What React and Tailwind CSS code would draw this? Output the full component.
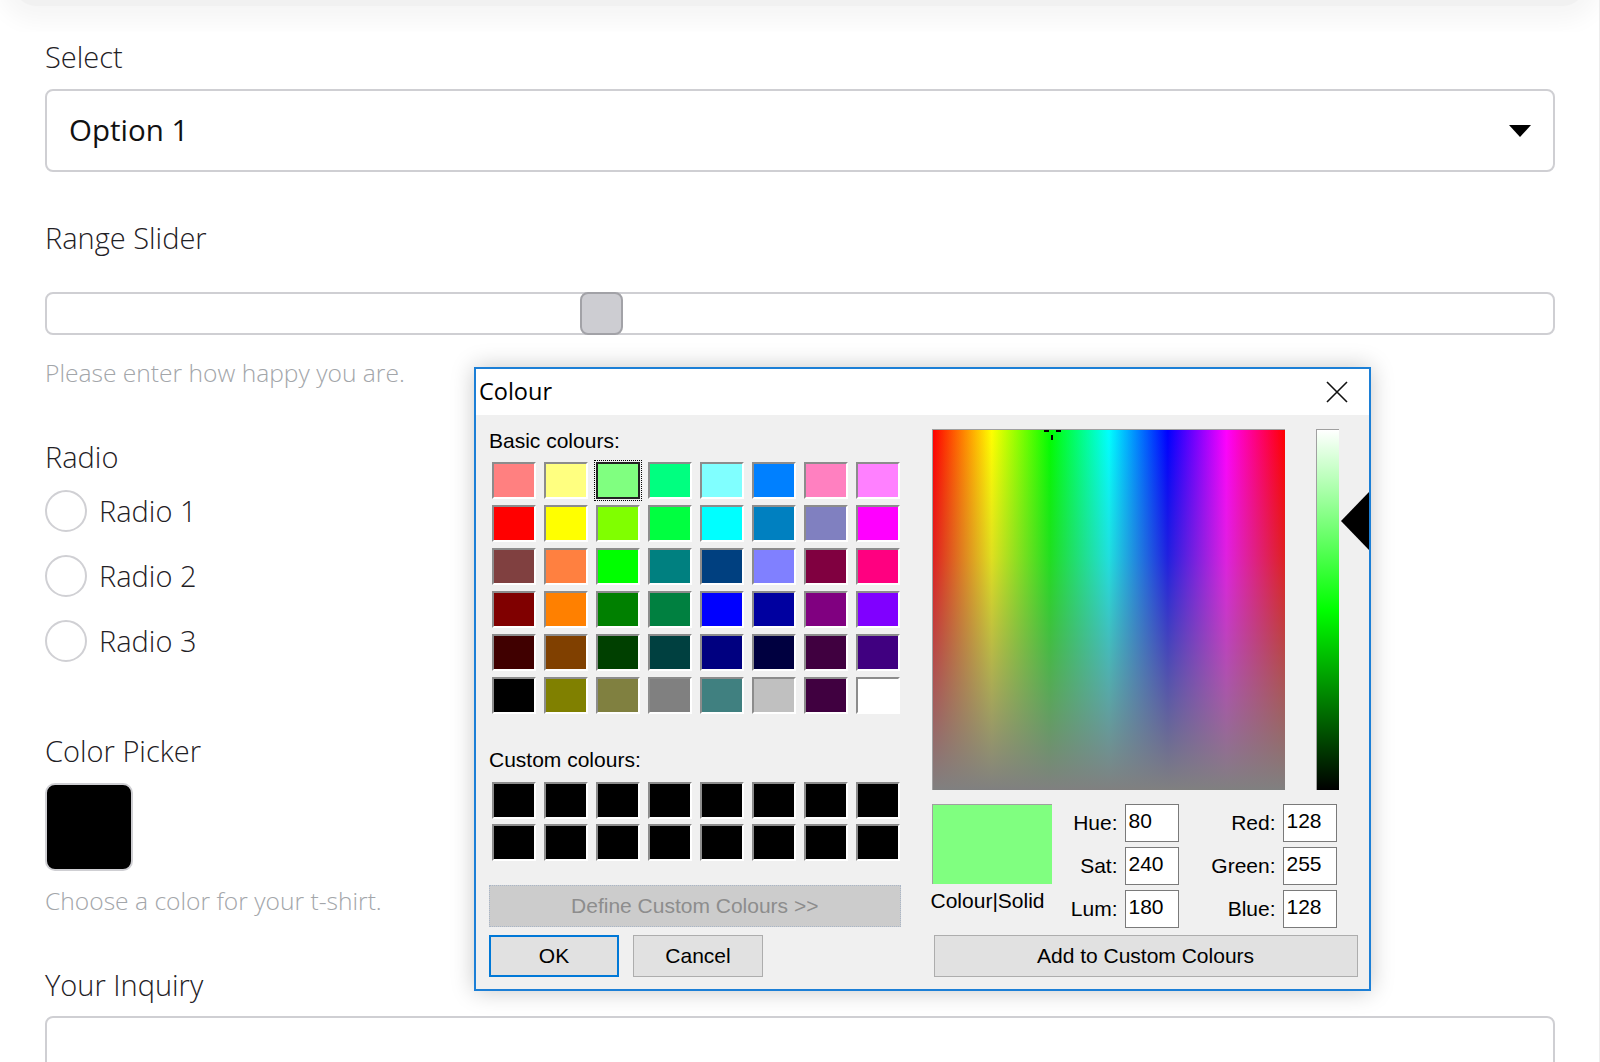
import React from 'react';

const basicColours = [
  ['#ff8080', '#ffff80', '#80ff80', '#00ff80', '#80ffff', '#0080ff', '#ff80c0', '#ff80ff'],
  ['#ff0000', '#ffff00', '#80ff00', '#00ff40', '#00ffff', '#0080c0', '#8080c0', '#ff00ff'],
  ['#804040', '#ff8040', '#00ff00', '#008080', '#004080', '#8080ff', '#800040', '#ff0080'],
  ['#800000', '#ff8000', '#008000', '#008040', '#0000ff', '#0000a0', '#800080', '#8000ff'],
  ['#400000', '#804000', '#004000', '#004040', '#000080', '#000040', '#400040', '#400080'],
  ['#000000', '#808000', '#808040', '#808080', '#408080', '#c0c0c0', '#400040', '#ffffff'],
];

const Swatch = ({ color, selected }) => (
  <div
    className={`w-[44px] h-[37px] border-2 ${
      selected
        ? 'border-[#222] outline outline-1 outline-dotted outline-black outline-offset-[1px]'
        : 'border-t-[#8c8c8c] border-l-[#8c8c8c] border-b-white border-r-white'
    }`}
    style={{ backgroundColor: color }}
  />
);

const NumField = ({ label, value }) => (
  <div className="flex items-start justify-end gap-[7px]">
    <span className="pt-[7px] leading-[24px]">{label}</span>
    <div className="w-[54px] h-[38px] bg-white border border-[#7a7a7a] pl-[3px] pt-[4px] leading-[24px]">
      {value}
    </div>
  </div>
);

const ColourDialog = () => (
  <div className="absolute left-[474px] top-[367px] w-[897px] h-[624px] flex flex-col border-2 border-[#1c7fd6] bg-[#f0f0f0] shadow-[0_0_22px_rgba(0,0,0,0.22)] font-['Liberation_Sans',Arial,sans-serif] text-[21px] text-black">
    {/* Title bar */}
    <div className="h-[46px] bg-white flex items-center justify-between pl-[3px] pr-[21px]">
      <span className="font-['Open_Sans',sans-serif] text-[23.5px] leading-none">Colour</span>
      <svg width="22" height="22" viewBox="0 0 22 22">
        <path d="M1 1 L21 21 M21 1 L1 21" stroke="#111" strokeWidth="1.6" fill="none" />
      </svg>
    </div>

    <div className="flex-1 flex pl-[13px] pt-[14px]">
      {/* Left column */}
      <div className="w-[412px] flex flex-col">
        <div className="leading-[24px]">Basic colours:</div>
        <div className="mt-[9px] ml-[3px] grid grid-cols-[repeat(8,44px)] gap-x-[8px] gap-y-[6px]">
          {basicColours.flat().map((c, i) => (
            <Swatch key={i} color={c} selected={i === 2} />
          ))}
        </div>
        <div className="mt-[34px] leading-[24px]">Custom colours:</div>
        <div className="mt-[10px] ml-[3px] grid grid-cols-[repeat(8,44px)] gap-x-[8px] gap-y-[5px]">
          {Array.from({ length: 16 }).map((_, i) => (
            <Swatch key={i} color="#000000" />
          ))}
        </div>
        <div className="mt-[24px] h-[42px] flex items-center justify-center bg-[#cccccc] border border-dotted border-[#a9b6c8] text-[#8d8d8d]">
          Define Custom Colours &gt;&gt;
        </div>
        <div className="mt-[8px] flex gap-[14px]">
          <div className="w-[130px] h-[42px] flex items-center justify-center bg-[#e1e1e1] border-2 border-[#0078d7]">OK</div>
          <div className="w-[130px] h-[42px] flex items-center justify-center bg-[#e1e1e1] border border-[#adadad]">Cancel</div>
        </div>
      </div>

      {/* Right column */}
      <div className="ml-[31px] w-[438px] flex flex-col">
        <div className="flex items-start">
          <div className="relative w-[353px] h-[361px] border-t border-l border-[#a0a0a0] bg-[linear-gradient(to_bottom,rgba(128,128,128,0),rgba(128,128,128,0.25)_35%,#808080),linear-gradient(to_right,#f00,#ff0,#0f0,#0ff,#00f,#f0f,#f00)]">
            <div className="absolute left-[111px] top-0 w-[5px] h-[2px] bg-black" />
            <div className="absolute left-[123px] top-0 w-[5px] h-[2px] bg-black" />
            <div className="absolute left-[118px] top-[5px] w-[2px] h-[5px] bg-black" />
          </div>
          <div className="ml-[31px] w-[23px] h-[361px] border-t border-l border-[#a0a0a0] bg-[linear-gradient(to_bottom,#fff,#0f0_50%,#000)]" />
          <svg className="ml-[2px] mt-[63px]" width="28" height="58" viewBox="0 0 28 58">
            <path d="M0 29 L28 0 L28 58 Z" fill="#000" />
          </svg>
        </div>

        <div className="mt-[14px] flex">
          <div className="w-[120px] flex flex-col">
            <div className="h-[80px] bg-[#80ff80] border-t border-l border-[#a0a0a0]" />
            <div className="mt-[5px] -ml-[1px] leading-[24px] whitespace-nowrap">Colour|Solid</div>
          </div>
          <div className="w-[127px] flex flex-col gap-[5px]">
            <NumField label="Hue:" value="80" />
            <NumField label="Sat:" value="240" />
            <NumField label="Lum:" value="180" />
          </div>
          <div className="w-[158px] flex flex-col gap-[5px]">
            <NumField label="Red:" value="128" />
            <NumField label="Green:" value="255" />
            <NumField label="Blue:" value="128" />
          </div>
        </div>

        <div className="mt-[7px] ml-[2px] w-[424px] h-[42px] flex items-center justify-center bg-[#e1e1e1] border border-[#adadad]">
          Add to Custom Colours
        </div>
      </div>
    </div>
  </div>
);

const Label = ({ children, className = '' }) => (
  <div className={`text-[29px] font-light leading-[36px] text-[#1f2125] ${className}`}>{children}</div>
);

const Help = ({ children, className = '' }) => (
  <div className={`text-[24.6px] font-light leading-[32px] text-[#a3a6aa] ${className}`}>{children}</div>
);

const Radio = ({ label }) => (
  <div className="flex items-center h-[42px]">
    <div className="w-[42px] h-[42px] rounded-full border-2 border-[#d0d0d4] bg-white" />
    <span className="ml-[12px] text-[29px] font-light text-[#1f2125]">{label}</span>
  </div>
);

export default function App() {
  return (
    <div className="relative w-[1600px] h-[1062px] overflow-hidden bg-white border-r border-[#ededed] font-['Open_Sans',sans-serif]">
      {/* shadow of the card above */}
      <div className="h-[32px] overflow-hidden px-[14px]">
        <div className="-mt-[38px] h-[44px] rounded-[26px] bg-[#f1f1f1] shadow-[0_0_22px_16px_#f6f6f6]" />
      </div>

      <div className="pl-[45px] pr-[44px] flex flex-col">
        <Label className="mt-[7px]">Select</Label>
        <div className="mt-[14px] h-[83px] rounded-[8px] border-2 border-[#cfcfd3] flex items-center justify-between pl-[22px] pr-[22px]">
          <span className="text-[29.5px] text-[#111]">Option 1</span>
          <svg width="22" height="12" viewBox="0 0 22 12">
            <path d="M0 0 L22 0 L11 12 Z" fill="#000" />
          </svg>
        </div>

        <Label className="mt-[48px]">Range Slider</Label>
        <div className="mt-[36px] h-[43px] rounded-[8px] border-2 border-[#cfcfd3] flex">
          <div className="ml-[533px] -my-[2px] w-[43px] h-[43px] rounded-[8px] bg-[#cdcdd2] border-2 border-[#a2a2a7]" />
        </div>
        <Help className="mt-[22px]">Please enter how happy you are.</Help>

        <Label className="mt-[50px]">Radio</Label>
        <div className="mt-[15px] flex flex-col gap-[23px]">
          <Radio label="Radio 1" />
          <Radio label="Radio 2" />
          <Radio label="Radio 3" />
        </div>

        <Label className="mt-[71px]">Color Picker</Label>
        <div className="mt-[14px] w-[88px] h-[88px] rounded-[10px] border-2 border-[#cfcfd3] bg-black" />
        <Help className="mt-[14px]">Choose a color for your t-shirt.</Help>

        <Label className="mt-[50px]">Your Inquiry</Label>
        <div className="mt-[13px] h-[120px] rounded-[8px] border-2 border-[#cfcfd3]" />
      </div>

      <ColourDialog />
    </div>
  );
}
